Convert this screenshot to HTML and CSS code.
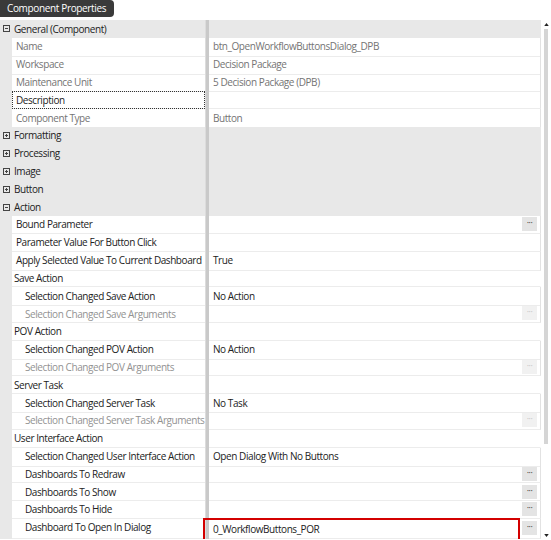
FILE: index.html
```html
<!DOCTYPE html>
<html lang="en">
<head>
<meta charset="utf-8">
<title>Component Properties</title>
<link rel="stylesheet" href="styles.css">
</head>
<body>
<div class="panel">
  <div class="tab">Component Properties</div>
  <div class="grid-wrap">
    <div class="rows">
      <div class="row cat"><div class="gutter"><svg class="exp" viewBox="0 0 7 7"><rect x="0.5" y="0.5" width="6" height="6" fill="none" stroke="#444"/><path d="M2 3.5h3" stroke="#444"/></svg></div><div class="name">General (Component)</div><div class="split"></div><div class="val"></div></div>
      <div class="row"><div class="gutter"></div><div class="name ro">Name</div><div class="split"></div><div class="val ro"><span class="txt">btn_OpenWorkflowButtonsDialog_DPB</span></div></div>
      <div class="row"><div class="gutter"></div><div class="name ro">Workspace</div><div class="split"></div><div class="val ro"><span class="txt">Decision Package</span></div></div>
      <div class="row"><div class="gutter"></div><div class="name ro">Maintenance Unit</div><div class="split"></div><div class="val ro"><span class="txt">5 Decision Package (DPB)</span></div></div>
      <div class="row"><div class="gutter"></div><div class="name focus">Description</div><div class="split"></div><div class="val"><span class="txt"></span></div></div>
      <div class="row"><div class="gutter"></div><div class="name ro">Component Type</div><div class="split"></div><div class="val ro"><span class="txt">Button</span></div></div>
      <div class="row cat"><div class="gutter"><svg class="exp" viewBox="0 0 7 7"><rect x="0.5" y="0.5" width="6" height="6" fill="none" stroke="#444"/><path d="M2 3.5h3M3.5 2v3" stroke="#444"/></svg></div><div class="name">Formatting</div><div class="split"></div><div class="val"></div></div>
      <div class="row cat"><div class="gutter"><svg class="exp" viewBox="0 0 7 7"><rect x="0.5" y="0.5" width="6" height="6" fill="none" stroke="#444"/><path d="M2 3.5h3M3.5 2v3" stroke="#444"/></svg></div><div class="name">Processing</div><div class="split"></div><div class="val"></div></div>
      <div class="row cat"><div class="gutter"><svg class="exp" viewBox="0 0 7 7"><rect x="0.5" y="0.5" width="6" height="6" fill="none" stroke="#444"/><path d="M2 3.5h3M3.5 2v3" stroke="#444"/></svg></div><div class="name">Image</div><div class="split"></div><div class="val"></div></div>
      <div class="row cat"><div class="gutter"><svg class="exp" viewBox="0 0 7 7"><rect x="0.5" y="0.5" width="6" height="6" fill="none" stroke="#444"/><path d="M2 3.5h3M3.5 2v3" stroke="#444"/></svg></div><div class="name">Button</div><div class="split"></div><div class="val"></div></div>
      <div class="row cat"><div class="gutter"><svg class="exp" viewBox="0 0 7 7"><rect x="0.5" y="0.5" width="6" height="6" fill="none" stroke="#444"/><path d="M2 3.5h3" stroke="#444"/></svg></div><div class="name">Action</div><div class="split"></div><div class="val"></div></div>
      <div class="row"><div class="gutter"></div><div class="name">Bound Parameter</div><div class="split"></div><div class="val"><span class="txt"></span><span class="dots">···</span></div></div>
      <div class="row"><div class="gutter"></div><div class="name">Parameter Value For Button Click</div><div class="split"></div><div class="val"><span class="txt"></span></div></div>
      <div class="row"><div class="gutter"></div><div class="name">Apply Selected Value To Current Dashboard</div><div class="split"></div><div class="val"><span class="txt">True</span></div></div>
      <div class="row"><div class="gutter"></div><div class="name group">Save Action</div><div class="split"></div><div class="val blank"></div></div>
      <div class="row"><div class="gutter"></div><div class="name sub">Selection Changed Save Action</div><div class="split"></div><div class="val"><span class="txt">No Action</span></div></div>
      <div class="row"><div class="gutter"></div><div class="name sub off">Selection Changed Save Arguments</div><div class="split"></div><div class="val"><span class="txt"></span><span class="dots off">···</span></div></div>
      <div class="row"><div class="gutter"></div><div class="name group">POV Action</div><div class="split"></div><div class="val blank"></div></div>
      <div class="row"><div class="gutter"></div><div class="name sub">Selection Changed POV Action</div><div class="split"></div><div class="val"><span class="txt">No Action</span></div></div>
      <div class="row"><div class="gutter"></div><div class="name sub off">Selection Changed POV Arguments</div><div class="split"></div><div class="val"><span class="txt"></span><span class="dots off">···</span></div></div>
      <div class="row"><div class="gutter"></div><div class="name group">Server Task</div><div class="split"></div><div class="val blank"></div></div>
      <div class="row"><div class="gutter"></div><div class="name sub">Selection Changed Server Task</div><div class="split"></div><div class="val"><span class="txt">No Task</span></div></div>
      <div class="row"><div class="gutter"></div><div class="name sub off">Selection Changed Server Task Arguments</div><div class="split"></div><div class="val"><span class="txt"></span><span class="dots off">···</span></div></div>
      <div class="row"><div class="gutter"></div><div class="name group">User Interface Action</div><div class="split"></div><div class="val blank"></div></div>
      <div class="row"><div class="gutter"></div><div class="name sub">Selection Changed User Interface Action</div><div class="split"></div><div class="val"><span class="txt">Open Dialog With No Buttons</span></div></div>
      <div class="row"><div class="gutter"></div><div class="name sub">Dashboards To Redraw</div><div class="split"></div><div class="val"><span class="txt"></span><span class="dots">···</span></div></div>
      <div class="row"><div class="gutter"></div><div class="name sub">Dashboards To Show</div><div class="split"></div><div class="val"><span class="txt"></span><span class="dots">···</span></div></div>
      <div class="row"><div class="gutter"></div><div class="name sub">Dashboards To Hide</div><div class="split"></div><div class="val"><span class="txt"></span><span class="dots">···</span></div></div>
      <div class="row"><div class="gutter"></div><div class="name sub">Dashboard To Open In Dialog</div><div class="split"></div><div class="val picked"><span class="txt">0_WorkflowButtons_POR</span><span class="dots">···</span></div></div>
    </div>
    <div class="scroll">
      <svg class="arrow" viewBox="0 0 6 4"><path d="M0 4L3 0L6 4Z" fill="#222"/></svg>
      <div class="thumb"></div>
      <div class="track"></div>
      <svg class="arrow" viewBox="0 0 6 4"><path d="M0 0L3 4L6 0Z" fill="#222"/></svg>
    </div>
  </div>
</div>
</body>
</html>
```

FILE: styles.css
```css
html, body {
  margin: 0;
  padding: 0;
  background: #fff;
}

body {
  font-family: "Open Sans", "Noto Sans", sans-serif;
  font-size: 10px;
  letter-spacing: -0.43px;
  color: #222;
  overflow: hidden;
}

.panel {
  width: 551px;
  height: 540px;
  display: flex;
  flex-direction: column;
}

.tab {
  align-self: flex-start;
  height: 17px;
  line-height: 17px;
  padding: 0 8px 0 7px;
  background: #3a3a3a;
  color: #fff;
  font-size: 10px;
  letter-spacing: -0.35px;
  border-radius: 0 4px 4px 0;
}

.grid-wrap {
  margin-top: 3px;
  display: flex;
  flex: 1;
  min-height: 0;
}

.rows {
  width: 541px;
  display: flex;
  flex-direction: column;
}

.row {
  height: 17.82px;
  flex: none;
  display: grid;
  grid-template-columns: 12px 193px 4px 1fr;
  line-height: 17.5px;
}

.gutter {
  background: #e8e8e8;
  display: flex;
  align-items: center;
  justify-content: center;
  padding-left: 1px;
}

.exp {
  width: 7px;
  height: 7px;
  display: block;
}

.name {
  padding-left: 4px;
  padding-top: 0.5px;
  white-space: nowrap;
  overflow: hidden;
  border-bottom: 1px solid #ececec;
  box-sizing: border-box;
}

.name.sub { padding-left: 13px; }
.name.group { padding-left: 2px; }

.ro { color: #747474; }
.off { color: #929292; }

.name.focus {
  outline: 1px dotted #333;
  outline-offset: -1px;
}

.split {
  background: #c9c9c9;
  border-left: 1px solid #dcdcdc;
  box-sizing: border-box;
}

.val {
  display: flex;
  align-items: center;
  border-bottom: 1px solid #ececec;
  border-right: 1px solid #e2e2e2;
  box-sizing: border-box;
  padding-right: 3px;
  min-width: 0;
}

.val.blank { border-right-color: transparent; }

.txt {
  flex: 1;
  align-self: stretch;
  padding-left: 4px;
  padding-top: 0.5px;
  white-space: nowrap;
  overflow: hidden;
}

.dots {
  width: 15px;
  height: 14px;
  background: #e4e4e4;
  color: #333;
  font-size: 9px;
  line-height: 12px;
  text-align: center;
  letter-spacing: -0.5px;
  flex: none;
}

.dots.off { color: #c4c4c4; background: #f1f1f1; }

.cat .gutter,
.cat .name,
.cat .val {
  background: #e8e8e8;
  border-color: #e8e8e8;
}

.cat .name { padding-left: 2px; }

.val.picked .txt {
  margin-left: -6px;
  padding-left: 8px;
  padding-top: 0;
  margin-right: 2px;
  border: 2px solid #d30000;
  border-bottom: none;
  margin-top: -1px;
  margin-bottom: -1px;
  line-height: 19px;
}

.scroll {
  width: 10px;
  display: flex;
  flex-direction: column;
  align-items: center;
}

.arrow {
  width: 5px;
  height: 3px;
  flex: none;
  margin: 3px 0;
}

.thumb {
  width: 4px;
  height: 415px;
  background: #d5d5d5;
  margin-left: -1px;
  flex: none;
}

.track { flex: 1; }
```
